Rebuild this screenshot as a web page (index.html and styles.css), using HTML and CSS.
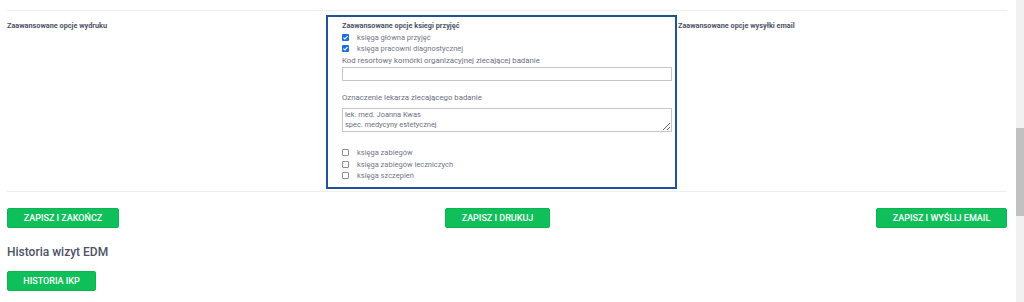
FILE: index.html
```html
<!DOCTYPE html>
<html lang="pl">
<head>
    <meta charset="UTF-8">
    <title>Opcje wizyty</title>
    <link rel="stylesheet" href="styles.css">
</head>
<body>
    <div class="page">
        <div class="options">
            <div class="options-col">
                <div class="options-title">Zaawansowane opcje wydruku</div>
            </div>
            <div class="options-box">
                <div class="options-title">Zaawansowane opcje ksiegi przyjęć</div>
                <label class="check">
                    <span class="box checked"><svg viewBox="0 0 8 8" width="7" height="7"><path d="M1.6 4.1 L3.3 5.7 L6.4 2.3" fill="none" stroke="#fff" stroke-width="1.3"/></svg></span>
                    księga główna przyjęć
                </label>
                <label class="check">
                    <span class="box checked"><svg viewBox="0 0 8 8" width="7" height="7"><path d="M1.6 4.1 L3.3 5.7 L6.4 2.3" fill="none" stroke="#fff" stroke-width="1.3"/></svg></span>
                    księga pracowni diagnostycznej
                </label>
                <div class="field-label">Kod resortowy komórki organizacyjnej zlecającej badanie</div>
                <input class="field-input" type="text">
                <div class="field-label doctor">Oznaczenie lekarza zlecającego badanie</div>
                <textarea class="field-area">lek. med. Joanna Kwas
spec. medycyny estetycznej</textarea>
                <div class="checks-bottom">
                    <label class="check"><span class="box"></span> księga zabiegów</label>
                    <label class="check"><span class="box"></span> księga zabiegów leczniczych</label>
                    <label class="check"><span class="box"></span> księga szczepień</label>
                </div>
            </div>
            <div class="options-col">
                <div class="options-title">Zaawansowane opcje wysyłki email</div>
            </div>
        </div>

        <div class="actions">
            <button class="btn">ZAPISZ I ZAKOŃCZ</button>
            <button class="btn">ZAPISZ I DRUKUJ</button>
            <button class="btn">ZAPISZ I WYŚLIJ EMAIL</button>
        </div>

        <h3 class="section-title">Historia wizyt EDM</h3>
        <button class="btn btn-small">HISTORIA IKP</button>
    </div>

    <div class="scrollbar"><div class="scrollbar-thumb"></div></div>
</body>
</html>
```

FILE: styles.css
```css
body {
    margin: 0;
    padding: 0;
    background-color: #fff;
    font-family: Roboto, "Liberation Sans", sans-serif;
    color: #6b6f80;
    overflow: hidden;
}
.page {
    width: 1000px;
    padding: 10px 0 0 7px;
}
.options {
    display: grid;
    grid-template-columns: 319px 351px 1fr;
    border-top: 1px solid #eeeff2;
    border-bottom: 1px solid #eeeff2;
    padding-top: 4px;
    padding-bottom: 2px;
}
.options-col {
    padding-top: 5px;
}
.options-col:last-child {
    padding-left: 1px;
}
.options-title {
    font-size: 7.3px;
    font-weight: bold;
    color: #4d5266;
    line-height: 11px;
}
.options-box {
    border: 2px solid #1f5296;
    height: 167px;
    padding: 3px 0 0 14px;
    box-sizing: content-box;
    width: 333px;
}
.check {
    display: flex;
    align-items: center;
    font-size: 7.5px;
    line-height: 11px;
    color: #737789;
}
.check:first-of-type {
    margin-top: 1px;
}
.checks-bottom .check {
    line-height: 11.5px;
}
.box {
    display: flex;
    align-items: center;
    justify-content: center;
    width: 7px;
    height: 7px;
    box-sizing: border-box;
    margin-right: 8px;
    border: 1px solid #8c8f98;
    border-radius: 1px;
    background-color: #fff;
}
.box.checked {
    border: none;
    background-color: #1a6fe0;
}
.box svg {
    display: block;
}
.field-label {
    font-size: 7.8px;
    line-height: 10px;
    margin-top: 2px;
    color: #6b6f80;
}
.field-input {
    display: block;
    width: 330px;
    height: 14px;
    box-sizing: border-box;
    margin: 1px 0 0;
    border: 1px solid #c4c6cc;
    padding: 0;
}
.doctor {
    margin-top: 12px;
}
.field-area {
    display: block;
    width: 330px;
    height: 24px;
    box-sizing: border-box;
    margin: 5px 0 0;
    border: 1px solid #c4c6cc;
    padding: 1px 2px;
    font-family: Roboto, "Liberation Sans", sans-serif;
    font-size: 7.4px;
    line-height: 9.5px;
    color: #6b6f80;
    resize: vertical;
    overflow: hidden;
}
.checks-bottom {
    margin-top: 15px;
}
.actions {
    display: flex;
    justify-content: space-between;
    width: 1000px;
    margin-top: 16px;
}
.btn {
    height: 20px;
    padding: 0 13px;
    background-color: #0fc05a;
    border: 1px solid #0bb552;
    border-radius: 2px;
    color: #fff;
    font-family: Roboto, "Liberation Sans", sans-serif;
    font-size: 9px;
    font-weight: 500;
    cursor: pointer;
}
.actions .btn:first-child {
    width: 112px;
}
.actions .btn:nth-child(2) {
    width: 105px;
}
.actions .btn:last-child {
    width: 131px;
}
.section-title {
    margin: 17px 0 10px;
    font-size: 12px;
    font-weight: 500;
    line-height: 14px;
    color: #4d5266;
}
.btn-small {
    width: 89px;
}
.scrollbar {
    position: fixed;
    top: 0;
    right: 0;
    width: 8px;
    height: 100%;
    background-color: #f1f1f1;
}
.scrollbar-thumb {
    margin-top: 128px;
    height: 88px;
    background-color: #c1c1c1;
}
```
